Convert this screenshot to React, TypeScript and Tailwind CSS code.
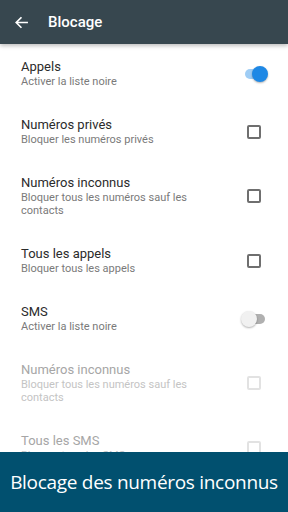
import type { FC } from 'react';

interface RowProps {
  title: string;
  subtitle: string;
  control: 'toggle-on' | 'toggle-off' | 'checkbox';
  disabled?: boolean;
}

const Toggle: FC<{ on: boolean }> = ({ on }) => (
  <div className="relative w-[22px] h-[16px] flex items-center">
    <div className={`w-[20px] h-[10px] rounded-full ml-[1px] ${on ? 'bg-[#9fcdf5]' : 'bg-[#b0b0b0]'}`} />
    <div
      className={`absolute top-0 w-[16px] h-[16px] rounded-full shadow-[0_1px_2px_rgba(0,0,0,0.3)] ${
        on ? 'left-[8px] bg-[#1e88e5]' : 'left-[-3px] bg-[#f1f1f1]'
      }`}
    />
  </div>
);

const Checkbox: FC<{ disabled?: boolean }> = ({ disabled }) => (
  <div
    className={`w-[14px] h-[14px] rounded-[2px] border-2 ${disabled ? 'border-[#e2e2e2]' : 'border-[#6f6f6f]'}`}
  />
);

const Row: FC<RowProps> = ({ title, subtitle, control, disabled }) => (
  <div className="flex items-center pl-[21px] pr-[27px] pt-[15px] pb-[14px]">
    <div className="flex-1 min-w-0 pr-[40px]">
      <div className={`text-[13px] leading-[16px] ${disabled ? 'text-[#a6a6a6]' : 'text-[#2b2b2b]'}`}>{title}</div>
      <div className={`text-[11px] leading-[13px] ${disabled ? 'text-[#c4c4c4]' : 'text-[#7a7a7a]'}`}>{subtitle}</div>
    </div>
    <div className="w-[14px] flex justify-center">
      {control === 'checkbox' ? (
        <Checkbox disabled={disabled} />
      ) : (
        <Toggle on={control === 'toggle-on'} />
      )}
    </div>
  </div>
);

export default function App() {
  return (
    <div className="w-[288px] h-[512px] flex flex-col bg-white overflow-hidden" style={{ fontFamily: 'Roboto, sans-serif' }}>
      <div className="h-[44px] shrink-0 bg-[#37474f] flex items-center shadow-[0_2px_4px_rgba(0,0,0,0.25)] relative z-10">
        <svg className="ml-[14px]" width="15" height="15" viewBox="0 0 24 24" fill="none" stroke="white" strokeWidth="2.6" strokeLinecap="square">
          <path d="M21 12H4M11 4.5L3.5 12l7.5 7.5" />
        </svg>
        <span className="ml-[19px] text-white text-[15px] font-medium">Blocage</span>
      </div>

      <div className="flex-1 overflow-hidden">
        <Row title="Appels" subtitle="Activer la liste noire" control="toggle-on" />
        <Row title="Numéros privés" subtitle="Bloquer les numéros privés" control="checkbox" />
        <Row title="Numéros inconnus" subtitle="Bloquer tous les numéros sauf les contacts" control="checkbox" />
        <Row title="Tous les appels" subtitle="Bloquer tous les appels" control="checkbox" />
        <Row title="SMS" subtitle="Activer la liste noire" control="toggle-off" />
        <Row title="Numéros inconnus" subtitle="Bloquer tous les numéros sauf les contacts" control="checkbox" disabled />
        <Row title="Tous les SMS" subtitle="Bloquer tous les SMS" control="checkbox" disabled />
      </div>

      <div className="h-[60px] shrink-0 bg-[#01506f] flex items-center justify-center">
        <span className="text-white text-[19px] whitespace-nowrap tracking-[-0.3px]" style={{ fontFamily: '"Open Sans", sans-serif' }}>
          Blocage des numéros inconnus
        </span>
      </div>
    </div>
  );
}
